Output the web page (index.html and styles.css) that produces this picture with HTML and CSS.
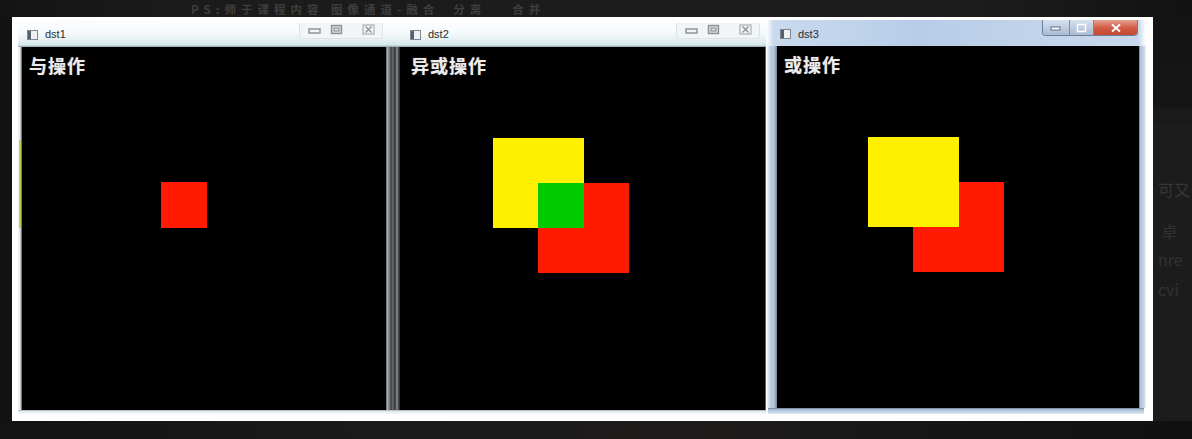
FILE: index.html
```html
<!DOCTYPE html>
<html lang="zh">
<head>
<meta charset="utf-8">
<title>dst</title>
<link rel="stylesheet" href="styles.css">
</head>
<body>
<div class="page">
  <div class="top">
    <span class="t1">PS:师于课程内容 图像通道-融合</span>
    <span class="t2">分离</span>
    <span class="t3">合并</span>
  </div>
  <div class="mid">
    <div class="lead"></div>
    <div class="panel">
      <div class="win win1">
        <div class="title">
          <span class="ico"></span><span class="name">dst1</span>
          <div class="btns">
            <svg class="b bmin" width="18" height="10" viewBox="0 0 18 10"><rect x="3" y="4" width="11" height="4" fill="none" stroke="#8a8f94" stroke-width="1.4"/></svg>
            <svg class="b bmax" width="14" height="12" viewBox="0 0 14 12"><rect x="1.5" y="1.5" width="10" height="8" fill="#d9dde0" stroke="#8a8f94" stroke-width="1.4"/><rect x="4" y="4" width="5" height="3" fill="none" stroke="#8a8f94"/></svg>
            <svg class="b bx" width="14" height="12" viewBox="0 0 14 12"><rect x="1" y="1" width="11" height="9" fill="none" stroke="#9aa0a4"/><path d="M3.5 2.5 L9.5 8.5 M9.5 2.5 L3.5 8.5" stroke="#8a8f94" stroke-width="1.3"/></svg>
          </div>
        </div>
        <div class="body">
          <div class="fl"><i class="streak"></i></div>
          <div class="canvas">
            <span class="label">与操作</span>
            <div class="sq red s1"></div>
          </div>
          <div class="fr"></div>
        </div>
        <div class="foot"></div>
      </div>
      <div class="win win2">
        <div class="title">
          <span class="ico"></span><span class="name">dst2</span>
          <div class="btns">
            <svg class="b bmin" width="18" height="10" viewBox="0 0 18 10"><rect x="3" y="4" width="11" height="4" fill="none" stroke="#8a8f94" stroke-width="1.4"/></svg>
            <svg class="b bmax" width="14" height="12" viewBox="0 0 14 12"><rect x="1.5" y="1.5" width="10" height="8" fill="#d9dde0" stroke="#8a8f94" stroke-width="1.4"/><rect x="4" y="4" width="5" height="3" fill="none" stroke="#8a8f94"/></svg>
            <svg class="b bx" width="14" height="12" viewBox="0 0 14 12"><rect x="1" y="1" width="11" height="9" fill="none" stroke="#9aa0a4"/><path d="M3.5 2.5 L9.5 8.5 M9.5 2.5 L3.5 8.5" stroke="#8a8f94" stroke-width="1.3"/></svg>
          </div>
        </div>
        <div class="body">
          <div class="fl"></div>
          <div class="canvas">
            <span class="label">异或操作</span>
            <div class="sq red s2r"></div>
            <div class="sq yellow s2y"></div>
            <div class="sq green s2g"></div>
          </div>
          <div class="fr"></div>
        </div>
        <div class="foot"></div>
      </div>
      <div class="win win3">
        <div class="title">
          <span class="ico"></span><span class="name">dst3</span>
          <div class="btns3">
            <span class="c cmin"><svg width="12" height="8" viewBox="0 0 12 8"><rect x="1" y="3" width="9" height="3" fill="#fff" stroke="#5f6f85"/></svg></span>
            <span class="c cmax"><svg width="12" height="10" viewBox="0 0 12 10"><rect x="1.5" y="1.5" width="8" height="7" fill="none" stroke="#fff" stroke-width="1.5"/></svg></span>
            <span class="c cclose"><svg width="12" height="10" viewBox="0 0 12 10"><path d="M2 1.5 L10 8.5 M10 1.5 L2 8.5" stroke="#fff" stroke-width="2"/></svg></span>
          </div>
        </div>
        <div class="body">
          <div class="fl"></div>
          <div class="canvas">
            <span class="label">或操作</span>
            <div class="sq red s3r"></div>
            <div class="sq yellow s3y"></div>
          </div>
          <div class="fr"></div>
        </div>
        <div class="foot"></div>
      </div>
    </div>
    <div class="side">
      <div class="faint f1">可又</div>
      <div class="faint f2">&nbsp;卓</div>
      <div class="faint f3">nre</div>
      <div class="faint f4">cvi</div>
    </div>
  </div>
  <div class="bottom"></div>
</div>
</body>
</html>
```

FILE: styles.css
```css
html, body {
  margin: 0;
  padding: 0;
  background: #161616;
}
.page {
  width: 1192px;
  height: 439px;
  overflow: hidden;
  display: flex;
  flex-direction: column;
  font-family: "Noto Sans CJK SC", "Liberation Sans", sans-serif;
}
.top {
  height: 17px;
  flex: none;
  display: flex;
  align-items: flex-start;
  background: linear-gradient(90deg, #141414 0, #1b1b1b 15%, #1d1d1d 80%, #121212 100%);
  color: #3e3e3e;
  font-size: 11.5px;
  line-height: 16px;
  font-weight: 700;
  letter-spacing: 5px;
  white-space: nowrap;
}
.t1 { margin-left: 191px; margin-top: 0.5px; }
.t2 { margin-left: 14px; margin-top: 0.5px; }
.t3 { margin-left: 26px; margin-top: 0.5px; }
.mid {
  display: flex;
  height: 404px;
  flex: none;
}
.lead {
  width: 12px;
  flex: none;
  background: #121212;
}
.panel {
  width: 1141px;
  flex: none;
  box-sizing: border-box;
  background: #ffffff;
  padding: 3px 7px 0 6px;
  display: flex;
}
.side {
  flex: 1;
  min-width: 0;
  background: linear-gradient(180deg, #141414 0, #151515 22%, #1a1a1a 23%, #1a1a1a 26%, #1c1c1c 27%, #1c1c1c 100%);
  color: #353535;
  overflow: hidden;
}
.faint {
  font-size: 16px;
  line-height: 20px;
  white-space: nowrap;
  margin-left: 5px;
}
.f1 { margin-top: 162px; color: #363636; }
.f2 { margin-top: 22px; color: #313131; }
.f3 { margin-top: 8px; color: #313131; }
.f4 { margin-top: 10px; color: #323232; }
.bottom {
  flex: 1;
  background: linear-gradient(90deg, #131313 0, #1a1a1a 30%, #1e1c1b 60%, #171717 75%, #101010 100%);
}

/* windows */
.win {
  display: flex;
  flex-direction: column;
  height: 394px;
  flex: none;
}
.win1 { width: 371px; }
.win2 { width: 377px; }
.win3 { width: 380px; }

.title {
  height: 27px;
  flex: none;
  display: flex;
  align-items: center;
  background: linear-gradient(180deg, #fdfefe 0, #f6fafb 45%, #e4f0f3 75%, #d4e6ea 93%, #8f9a9e 100%);
}
.win3 .title {
  height: 26px;
  background: linear-gradient(90deg, #ffffff 0, #c9daee 2%, #b7cde8 40%, #c1d3ea 70%, #c8d8ec 98%, #ffffff 100%);
}
.ico {
  width: 9px;
  height: 8px;
  border: 1px solid #7d8790;
  background: linear-gradient(90deg, #56606a 0, #56606a 35%, #eef2f4 35%);
  margin-left: 9px;
  margin-top: 2px;
}
.win2 .ico { margin-left: 21px; }
.win3 .ico { margin-left: 14px; }
.name {
  font-family: "Liberation Sans", sans-serif;
  font-size: 11px;
  color: #2a2e33;
  margin-left: 7px;
  margin-top: 1px;
}
.btns {
  margin-left: auto;
  margin-right: 6px;
  margin-top: -6px;
  display: flex;
  align-items: center;
  height: 15px;
  padding: 0 6px;
  border: 1px solid #dde3e6;
  border-top: none;
  border-radius: 0 0 3px 3px;
  background: #f2f5f6;
}
.b { display: block; }
.bmin { margin-right: 6px; }
.bmax { margin-right: 18px; }
.btns3 {
  margin-left: auto;
  margin-right: 8px;
  margin-top: -10px;
  display: flex;
  height: 15px;
  border: 1px solid #6d7f98;
  border-top: none;
  border-radius: 0 0 4px 4px;
  overflow: hidden;
}
.c {
  display: flex;
  align-items: center;
  justify-content: center;
}
.cmin {
  width: 26px;
  background: linear-gradient(180deg, #d6e1ee 0, #a9bbd3 100%);
  border-right: 1px solid #7b8ca4;
}
.cmax {
  width: 23px;
  background: linear-gradient(180deg, #d6e1ee 0, #a9bbd3 100%);
  border-right: 1px solid #7b8ca4;
}
.cclose {
  width: 43px;
  background: linear-gradient(180deg, #e6a08f 0, #d05a43 55%, #c54a34 100%);
}

.body {
  display: flex;
  height: 363px;
  flex: none;
}
.win3 .body { height: 362px; }
.fl, .fr {
  flex: none;
  position: relative;
}
.win1 .fl {
  width: 4px;
  background: linear-gradient(90deg, #f4f7f8 0, #e6ecee 50%, #9ea6aa 75%, #404448 100%);
}
.win1 .fr {
  width: 3px;
  background: linear-gradient(90deg, #5a5e62 0, #a9afb2 50%, #70767a 100%);
}
.win2 .fl {
  width: 11px;
  background: linear-gradient(90deg, #8d9296 0, #3b3f42 18%, #6a6f73 36%, #2c2f32 54%, #8a9094 72%, #4a4e52 86%, #1d1f21 100%);
}
.win2 .fr {
  width: 1px;
  background: #5d6266;
}
.win3 .fl {
  width: 11px;
  background: linear-gradient(90deg, #ffffff 0, #e4ecf4 18%, #bccde2 40%, #b2c4dc 75%, #6f7f95 100%);
}
.win3 .fr {
  width: 7px;
  background: linear-gradient(90deg, #6f7f95 0, #b7c8de 25%, #c5d4e6 70%, #eef3f8 100%);
}
.streak {
  position: absolute;
  left: 1px;
  top: 93px;
  width: 2px;
  height: 88px;
  background: #c8cd5a;
}

.canvas {
  flex: none;
  position: relative;
  background: #000;
  padding: 8px 0 0 7px;
  box-sizing: border-box;
}
.win1 .canvas { width: 364px; }
.win2 .canvas { width: 365px; padding-left: 11px; }
.win3 .canvas { width: 362px; padding-left: 7px; padding-top: 8px; }
.label {
  display: block;
  color: #ececec;
  font-size: 18px;
  line-height: 20px;
  font-weight: 700;
  letter-spacing: 1px;
  text-shadow: 0 0 1px rgba(255,255,255,0.5);
}

.sq { position: absolute; }
.red { background: #ff1a00; }
.yellow { background: #ffef00; }
.green { background: #00cc00; }
.s1 { left: 139px; top: 135px; width: 46px; height: 46px; }
.s2y { left: 93px; top: 91px; width: 91px; height: 90px; }
.s2r { left: 138px; top: 136px; width: 91px; height: 90px; }
.s2g { left: 138px; top: 136px; width: 46px; height: 45px; }
.s3y { left: 91px; top: 91px; width: 91px; height: 90px; }
.s3r { left: 136px; top: 136px; width: 91px; height: 90px; }

.foot {
  height: 4px;
  flex: none;
  background: linear-gradient(180deg, #a6b0b4 0, #e4eef0 40%, #f4f8f9 100%);
}
.win3 .foot {
  height: 6px;
  background: linear-gradient(180deg, #6f7f95 0, #b2c4dc 30%, #c3d2e6 70%, #e8eef5 100%);
  margin: 0 2px 0 2px;
}
```
